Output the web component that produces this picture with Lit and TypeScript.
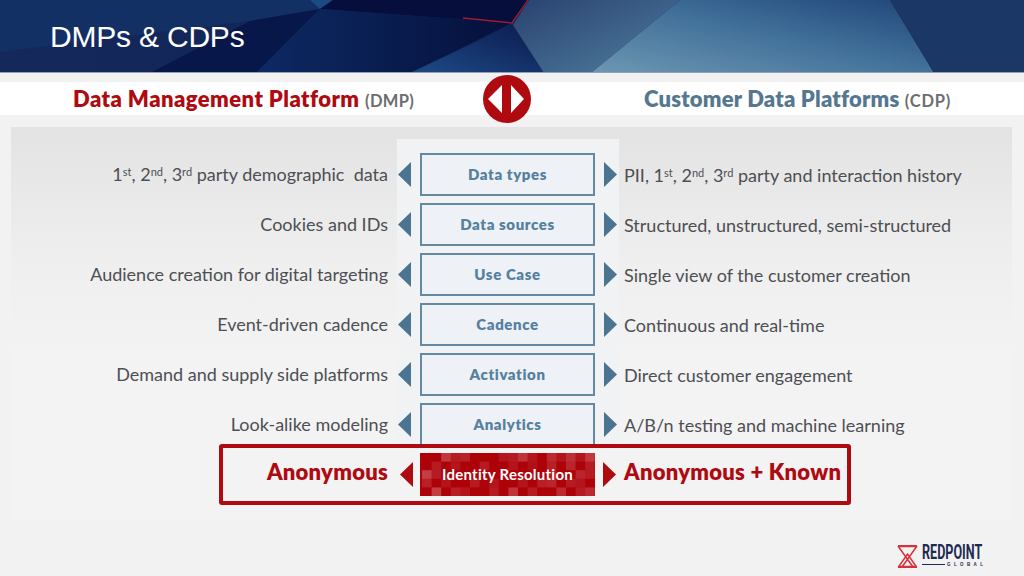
import { LitElement, html, css, svg } from "lit";
import { customElement } from "lit/decorators.js";

const ROWS = [
  { l: html`1<sup>st</sup>, 2<sup>nd</sup>, 3<sup>rd</sup> party demographic&nbsp; data`, c: "Data types", r: html`PII, 1<sup>st</sup>, 2<sup>nd</sup>, 3<sup>rd</sup> party and interaction history` },
  { l: html`Cookies and IDs`, c: "Data sources", r: html`Structured, unstructured, semi-structured` },
  { l: html`Audience creation for digital targeting`, c: "Use Case", r: html`Single view of the customer creation` },
  { l: html`Event-driven cadence`, c: "Cadence", r: html`Continuous and real-time` },
  { l: html`Demand and supply side platforms`, c: "Activation", r: html`Direct customer engagement` },
  { l: html`Look-alike modeling`, c: "Analytics", r: html`A/B/n testing and machine learning` },
];

const CELLS: [number, number, number][] = [
  [2,0,.22],[3,0,.1],[4,0,.12],[8,0,.08],[9,0,.1],[10,0,.2],[11,0,.08],[13,0,.16],[14,0,.08],[15,0,.18],[16,0,.08],[17,0,.22],
  [1,1,.1],[3,1,.08],[6,1,.1],[9,1,.08],[11,1,.06],[13,1,.12],[15,1,.14],[17,1,.1],
  [0,2,.24],[1,2,.1],[13,2,.1],[16,2,.14],[17,2,.1],
  [0,3,.12],[2,3,.08],[5,3,.1],[7,3,.08],[10,3,.08],[12,3,.12],[13,3,.14],[15,3,.1],[16,3,.08],
  [1,4,.24],[3,4,.12],[4,4,.08],[7,4,.1],[9,4,.2],[11,4,.1],[14,4,.16],[16,4,.1],[17,4,.16],
];

@customElement("app-root")
export class AppRoot extends LitElement {
  static styles = css`
    :host { display: block; width: 1024px; height: 576px; overflow: hidden; background: #f2f2f3; font-family: "Lato", "Open Sans", sans-serif; color: #4d4f53; }
    .hero { position: relative; height: 73px; display: flex; align-items: center; }
    .hero svg { position: absolute; inset: 0; width: 100%; height: 100%; }
    .hero h1 { position: relative; margin: 0 0 0 50px; font: 400 30px "Liberation Sans", sans-serif; color: #fff; letter-spacing: -.2px; }
    .band { margin-top: 9px; height: 33px; background: #fff; display: grid; grid-template-columns: 483px 48px 1fr; align-items: center; }
    .title { font-weight: 800; font-size: 22px; white-space: nowrap; }
    .title small { font-size: 16.5px; font-weight: 700; color: #6b6d70; }
    .dmp { color: #ae0a10; text-align: right; padding-right: 69px; letter-spacing: .45px; }
    .dmp small { letter-spacing: .3px; }
    .cdp { color: #55778f; padding-left: 113px; letter-spacing: .2px; }
    .cdp small { letter-spacing: .8px; }
    .disc { width: 48px; height: 48px; display: block; margin: -8px 0; overflow: visible; }
    .panel { margin: 12px 12px 0 11px; height: 393px; background: linear-gradient(#e3e3e3, #efefef 35%, #f3f3f4 60%); padding-top: 12px; box-sizing: border-box; }
    .row { display: grid; grid-template-columns: 386px 222px 1fr; height: 50px; font-size: 18px; line-height: 22px; }
    .row:first-child .mid { padding-top: 14px; }
    .row:first-child { height: 64px; }
    .row:first-child .side { padding-top: 14px; }
    .side { display: flex; align-items: center; white-space: pre; padding-bottom: 7px; }
    .side.l { justify-content: flex-end; padding-right: 9px; padding-bottom: 9px; }
    .side.r { padding-left: 5px; }
    .side span { display: block; }
    sup { font-size: 11px; line-height: 0; vertical-align: 5px; }
    .mid { background: #f1f2f3; display: grid; grid-template-columns: 23px 175px 24px; align-items: start; }
    .tri { width: 13px; height: 25px; margin-top: 9px; display: block; fill: #4a7490; }
    .tri.a { margin-left: 1px; }
    .tri.b { margin-left: 9px; }
    .box { height: 43px; box-sizing: border-box; border: 2px solid #6389a3; background: #eef2f6; color: #55819f; font-weight: 800; font-size: 15px; display: flex; align-items: center; justify-content: center; padding-bottom: 1px; letter-spacing: .6px; }
    .ident { margin: -9px 0 0 208px; width: 632px; height: 61px; box-sizing: border-box; border: 4px solid #ae0a10; border-radius: 3px; display: grid; grid-template-columns: 165px 32px 175px 1fr; align-items: center; position: relative; background: #f3f3f4; }
    .ident .big { color: #ae0a10; font-weight: 800; font-size: 22px; letter-spacing: .25px; white-space: nowrap; padding-bottom: 6px; }
    .ident .big.left { text-align: right; }
    .ident .tri { fill: #ae0a10; margin: 0; }
    .ident .tri.c { justify-self: end; margin-right: 7px; }
    .rbox { position: relative; height: 43px; background: #ae0209; display: flex; align-items: center; justify-content: center; color: #fff; font-weight: 700; font-size: 15px; letter-spacing: .25px; padding-bottom: 2px; box-sizing: border-box; }
    .rbox svg { position: absolute; inset: 0; width: 100%; height: 100%; }
    .rbox span { position: relative; }
    .rightwrap { display: flex; align-items: center; gap: 8px; padding-left: 8px; }
    .logo { position: absolute; left: 897px; top: 545px; display: flex; gap: 4px; }
    .logo svg { width: 21px; height: 23px; display: block; }
    .wm { display: flex; flex-direction: column; color: #1f2a52; line-height: 1; width: 62px; }
    .wm b { font: 700 19.5px "Roboto", sans-serif; height: 15px; line-height: 15px; transform: scaleX(.645); transform-origin: left; white-space: nowrap; }
    .wm i { font: 700 4.500px "Liberation Sans", sans-serif; font-style: normal; letter-spacing: 3.4px; display: flex; align-items: center; gap: 2px; margin-top: 2px; white-space: nowrap; }
    .wm i::before { content: ""; width: 23px; height: 1px; background: #1f2a52; flex: none; }
  `;

  private tri(dir: "a" | "b") {
    const p = dir === "a" ? "13,0 13,25 0,12.5" : "0,0 0,25 13,12.5";
    return html`<svg class="tri ${dir}" viewBox="0 0 13 25"><polygon points=${p}></polygon></svg>`;
  }

  render() {
    return html`
      <div class="hero">
        <svg viewBox="0 0 1024 73" preserveAspectRatio="none">
          <defs>
            <linearGradient id="a" x1="0" x2="1" y1="0" y2="0"><stop offset="0" stop-color="#14285c"/><stop offset="1" stop-color="#0c1f50"/></linearGradient>
            <linearGradient id="b" x1="0" x2="1" y1="1" y2="0"><stop offset="0" stop-color="#6d98b3"/><stop offset=".55" stop-color="#3f6e98"/><stop offset="1" stop-color="#1f4478"/></linearGradient>
            <linearGradient id="c" x1="0" x2="1" y1="0" y2="1"><stop offset="0" stop-color="#2a4270"/><stop offset="1" stop-color="#4f7e9f"/></linearGradient>
            <linearGradient id="d" x1="0" x2="1" y1="0" y2="0"><stop offset="0" stop-color="#0d2a63"/><stop offset="1" stop-color="#05103c"/></linearGradient>
            <linearGradient id="e" x1="0" x2="1" y1="1" y2="0"><stop offset="0" stop-color="#1f4a86"/><stop offset="1" stop-color="#0a1a4e"/></linearGradient>
          </defs>
          <rect width="1024" height="73" fill="url(#a)"/>
          <polygon points="0,0 333,0 320,9 250,21 0,52" fill="#123064"/>
          <polygon points="150,73 250,21 320,9 256,73" fill="#08174a"/>
          <polygon points="310,0 333,0 320,9" fill="#1c4a82"/>
          <polygon points="333,0 529,0 512,23 320,9" fill="#060f3c"/>
          <polygon points="320,9 512,23 410,73 256,73" fill="url(#d)"/>
          <polygon points="512,25 544,73 410,73" fill="url(#e)"/>
          <polygon points="513,25 529,0 680,0 591,73 544,73" fill="url(#c)"/>
          <polygon points="591,73 680,0 890,0 934,73" fill="url(#b)"/>
          <polygon points="890,0 1024,0 1024,73 934,73" fill="#1b3766"/>
          <polyline points="463,18 512,23 528,0" fill="none" stroke="#a01a30" stroke-width="1.4"/>
          <rect y="72" width="1024" height="1" fill="#8fa0b8"/>
        </svg>
        <h1>DMPs &amp; CDPs</h1>
      </div>
      <div class="band">
        <div class="title dmp">Data Management Platform <small>(DMP)</small></div>
        <svg class="disc" viewBox="0 0 48 48">
          <circle cx="24" cy="24" r="24" fill="#ae0a10"/>
          <polygon points="19,10 19,38 5,24" fill="#fff"/>
          <polygon points="28,10 28,38 41,24" fill="#fff"/>
        </svg>
        <div class="title cdp">Customer Data Platforms <small>(CDP)</small></div>
      </div>
      <div class="panel">
        ${ROWS.map(r => html`
          <div class="row">
            <div class="side l"><span>${r.l}</span></div>
            <div class="mid">${this.tri("a")}<div class="box">${r.c}</div>${this.tri("b")}</div>
            <div class="side r"><span>${r.r}</span></div>
          </div>`)}
        <div class="ident">
          <div class="big left">Anonymous</div>
          <svg class="tri c" viewBox="0 0 13 25"><polygon points="13,0 13,25 0,12.5"></polygon></svg>
          <div class="rbox">
            <svg viewBox="0 0 175 43">${CELLS.map(([x, y, o]) => svg`<rect x=${x * 9.6 + 2} y=${y * 8.6} width="9.6" height="8.6" fill="#fff" opacity=${o}></rect>`)}</svg>
            <span>Identity Resolution</span>
          </div>
          <div class="rightwrap">
            <svg class="tri" viewBox="0 0 13 25"><polygon points="0,0 0,25 13,12.5"></polygon></svg>
            <div class="big">Anonymous + Known</div>
          </div>
        </div>
      </div>
      <div class="logo">
        <svg viewBox="0 0 21 23" fill="none" stroke="#d8323c">
          <path d="M1 1.200H20M1 21.800H20" stroke-width="2.200"/>
          <path d="M1 1L16 22M20 1L5 22M1.500 22L10.500 9L19.500 22" stroke-width="1.500"/>
        </svg>
        <div class="wm"><b>REDPOINT</b><i>GLOBAL</i></div>
      </div>
    `;
  }
}
